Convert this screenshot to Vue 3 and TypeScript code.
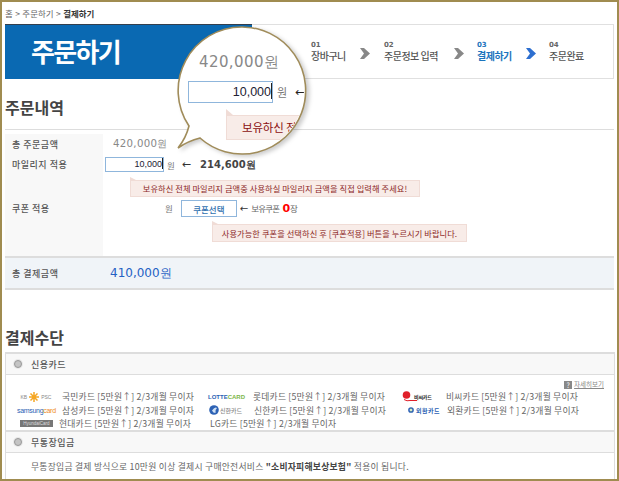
<script setup lang="ts">
const steps = [
  { no: '01', label: '장바구니', width: 73, text: 49 },
  { no: '02', label: '주문정보 입력', width: 93, text: 70 },
  { no: '03', label: '결제하기', width: 72, text: 49 },
  { no: '04', label: '주문완료', width: 60, text: 60 },
]
const activeStep = '03'
const benefit = '[5만원↑] 2/3개월 무이자'
const cards = [
  { name: '국민카드', kind: 'kb', logo: [{ t: 'KB', c: 'gray' }, { t: 'PSC', c: 'gray' }] },
  { name: '롯데카드', kind: 'lotte', logo: [{ t: 'LOTTE', c: 'blue' }, { t: 'CARD', c: 'green' }] },
  { name: '비씨카드', kind: 'bc', logo: [{ t: '비씨카드', c: 'dark' }] },
  { name: '삼성카드', kind: 'samsung', logo: [{ t: 'samsung', c: 'blue' }, { t: 'card', c: 'orange' }] },
  { name: '신한카드', kind: 'shinhan', logo: [{ t: '신한카드', c: 'gray' }] },
  { name: '외환카드', kind: 'keb', logo: [{ t: '외환카드', c: 'blue' }] },
  { name: '현대카드', kind: 'hyundai', logo: [{ t: 'HyundaiCard', c: 'light' }] },
  { name: 'LG카드', kind: 'none', logo: [] },
]
</script>

<template>
  <div class="frame">
    <div class="crumbs">홈 &gt; 주문하기 &gt; <b>결제하기</b></div>

    <header class="hero">
      <div class="hero-title">주문하기</div>
      <ol class="steps">
        <li
          v-for="(s, i) in steps"
          :key="s.no"
          class="step"
          :class="{ active: s.no === activeStep }"
          :style="{ width: s.width + 'px' }"
        >
          <div class="step-text" :style="{ width: s.text + 'px' }">
            <span class="step-no">{{ s.no }}</span>
            <span class="step-label">{{ s.label }}</span>
          </div>
          <svg v-if="i < 3" class="chev" viewBox="0 0 10 11" width="10" height="11">
            <path d="M0 0h4l6 5.500-6 5.500H0l4-5.500z" />
          </svg>
        </li>
      </ol>
    </header>

    <h2 class="section order-title">주문내역</h2>

    <section class="order">
      <div class="label">총 주문금액</div>
      <div class="value"><span class="amount">420,000원</span></div>

      <div class="label">마일리지 적용</div>
      <div class="value">
        <span class="input">10,000<i class="caret"></i></span>
        <span class="won">원</span>
        <span class="arrow">←</span>
        <strong class="mileage">214,600원</strong>
      </div>

      <div class="label"></div>
      <div class="value top">
        <div class="tip tip-a">보유하신 전체 마일리지 금액중 사용하실 마일리지 금액을 직접 입력해 주세요!</div>
      </div>

      <div class="label">쿠폰 적용</div>
      <div class="value">
        <span class="won coupon-won">원</span>
        <button class="coupon-btn" type="button">쿠폰선택</button>
        <span class="arrow small">←</span>
        <span class="owned">보유쿠폰 <em>0</em>장</span>
      </div>

      <div class="label"></div>
      <div class="value top">
        <div class="tip tip-b">사용가능한 쿠폰을 선택하신 후 [쿠폰적용] 버튼을 누르시기 바랍니다.</div>
      </div>
    </section>

    <section class="total">
      <span class="total-label">총 결제금액</span>
      <span class="total-value">410,000원</span>
    </section>

    <h2 class="section pay-title">결제수단</h2>

    <section class="pay">
      <div class="pay-head">
        <i class="radio"></i><span>신용카드</span>
      </div>
      <div class="pay-cards">
        <div class="more"><i class="q">?</i><a>자세히보기</a></div>
        <div class="card-grid">
          <div v-for="c in cards" :key="c.name" class="card">
            <span class="logo" :class="'logo-' + c.kind">
              <svg v-if="c.kind === 'bc'" class="bc-mark" viewBox="0 0 16 11" width="16" height="11">
                <circle cx="4.500" cy="4" r="3.800" fill="#e0202a" />
                <path d="M2 8.500 Q5 10.500 8 9.500 H15" fill="none" stroke="#e0202a" stroke-width="1" />
              </svg>
              <svg v-if="c.kind === 'shinhan'" class="mark" viewBox="0 0 10 10" width="10" height="10">
                <circle cx="5" cy="5" r="4.800" fill="#2d62b5" />
                <path d="M3 5.500 Q6 1.500 8 3 Q6 4.500 6.500 8 Q4 8 3 5.500z" fill="#cfe0f4" />
              </svg>
              <svg v-if="c.kind === 'keb'" class="mark" viewBox="0 0 10 10" width="6" height="6">
                <circle cx="5" cy="5" r="3.500" fill="none" stroke="#2d62b5" stroke-width="2.500" />
                <path d="M5 2v6" stroke="#7ab648" stroke-width="1" />
              </svg>
              <template v-for="(p, idx) in c.logo" :key="p.t">
                <svg
                  v-if="c.kind === 'kb' && idx === 1"
                  class="kb-star"
                  viewBox="0 0 10 10"
                  width="10"
                  height="10"
                >
                  <path
                    d="M5 0v10M0 5h10M1.500 1.500l7 7M8.500 1.500l-7 7"
                    stroke="#f5a623"
                    stroke-width="1.500"
                  />
                </svg>
                <span :class="'ink-' + p.c">{{ p.t }}</span>
              </template>
            </span>
            <span class="card-text">{{ c.name }} {{ benefit }}</span>
          </div>
        </div>
      </div>
      <div class="pay-head second">
        <i class="radio"></i><span>무통장입금</span>
      </div>
      <p class="pay-note">
        무통장입금 결제 방식으로 10만원 이상 결제시 구매안전서비스 <b>"소비자피해보상보험"</b> 적용이 됩니다.
      </p>
    </section>

    <!-- Magnifier callout over the form -->
    <div class="lens">
      <svg class="lens-shape" viewBox="0 0 140 140" width="140" height="140">
        <path
          d="M66 2A63.500 63.500 0 1 1 24 113Q12 116 2 123Q10 113 13 101A63.500 63.500 0 0 1 66 2z"
          fill="#fff"
          stroke="#a08c5a"
          stroke-width="1.600"
        />
      </svg>
      <div class="lens-content">
        <div class="lens-amount">420,000원</div>
        <div class="lens-row">
          <span class="lens-input">10,000<i class="lens-caret"></i></span>
          <span class="lens-won">원</span>
          <span class="lens-arrow">←</span>
        </div>
        <div class="lens-tip">보유하신 전체</div>
      </div>
    </div>
  </div>
</template>

<style>
html, body { margin: 0; overflow: hidden; background: #fff; }
</style>

<style scoped>
.frame {
  position: relative;
  box-sizing: border-box;
  width: 619px;
  height: 481px;
  overflow: hidden;
  border: 2px solid #a08c50;
  padding: 0 3px;
  background: #fff;
  font-family: "Noto Sans CJK KR", "Noto Sans", sans-serif;
  color: #555;
}
.crumbs {
  height: 22px;
  padding-top: 5px;
  box-sizing: border-box;
  font-size: 8.500px;
  line-height: 12px;
  color: #666;
  word-spacing: 0.500px;
}
.crumbs b { color: #333; }

.hero {
  display: flex;
  height: 55px;
  box-sizing: border-box;
  border: 1px solid #e0e0e0;
  border-left: 0;
}
.hero-title {
  box-sizing: border-box;
  width: 247px;
  margin: -1px 0;
  padding: 6px 0 0 26px;
  background: #0a69b2;
  border-top: 1px solid #333f4d;
  color: #fff;
  font-size: 26px;
  font-weight: 700;
  line-height: 40px;
  letter-spacing: -1.700px;
}
.steps {
  display: flex;
  margin: 0;
  padding: 17px 0 0 59px;
  list-style: none;
}
.step { display: flex; color: #555; }
.step-text { display: flex; flex-direction: column; flex: none; }
.step-no {
  font-family: "DejaVu Sans", sans-serif;
  font-size: 7px;
  line-height: 7px;
  font-weight: 700;
  color: #666;
}
.step-label {
  font-size: 10px;
  line-height: 13px;
  font-weight: 500;
  letter-spacing: -0.500px;
  white-space: nowrap;
}
.chev { margin: 6px 0 0 0; fill: #888; flex: none; }
.step.active .step-no, .step.active .step-label { color: #1b74bd; }
.step.active .step-label { font-weight: 700; }
.step.active .chev { fill: #2d6fd0; }

.section {
  margin: 0;
  font-size: 16px;
  font-weight: 700;
  color: #444;
  line-height: 22px;
}
.order-title {
  height: 51px;
  padding-top: 17px;
  box-sizing: border-box;
  border-bottom: 1px solid #ddd;
}
.order {
  display: grid;
  grid-template-columns: 98px 1fr;
  grid-template-rows: 20px 21px 21px 24px 36px;
  margin-top: 4px;
  width: 609px;
  height: 122px;
}
.label {
  background: #f8f8f8;
  padding-left: 7px;
  font-size: 9px;
  font-weight: 500;
  letter-spacing: 0.500px;
  color: #555;
  display: flex;
  align-items: center;
}
.value { display: flex; align-items: center; min-width: 0; position: relative; }
.value.top { align-items: flex-start; }
.amount {
  padding-left: 10px;
  font-family: "DejaVu Sans", sans-serif;
  font-size: 10.200px;
  color: #888;
  letter-spacing: 0.300px;
}
.input {
  box-sizing: border-box;
  width: 59px;
  height: 15px;
  margin-left: 2px;
  padding-right: 0;
  border: 1px solid #8fb6dc;
  text-align: right;
  font-family: "Liberation Sans", sans-serif;
  font-size: 9px;
  line-height: 13px;
  color: #223;
}
.caret {
  display: inline-block;
  width: 1px;
  height: 11px;
  background: #222;
  vertical-align: -2px;
}
.won { margin-left: 3px; font-size: 8.500px; color: #777; }
.arrow {
  margin-left: 7px;
  font-family: "DejaVu Sans", sans-serif;
  font-size: 11px;
  color: #333;
}
.mileage {
  margin-left: 9px;
  font-family: "DejaVu Sans", sans-serif;
  font-size: 10px;
  font-weight: 700;
  color: #444;
}
.tip {
  position: relative;
  box-sizing: border-box;
  background: #f8ece8;
  border: 1px solid #f0dcd6;
  font-size: 8.200px;
  color: #8b1f1f;
  letter-spacing: 0.100px;
  white-space: nowrap;
  text-align: center;
}
.tip::before {
  content: "";
  position: absolute;
  left: -1px;
  top: -4px;
  width: 0;
  height: 0;
  border-left: 6px solid #f0dcd6;
  border-top: 3px solid transparent;
}
.tip-a { width: 290px; height: 17px; line-height: 15px; margin: 5px 0 0 27px; }
.tip-b { width: 255px; height: 18px; line-height: 16px; margin: 4px 0 0 109px; }
.coupon-won { margin-left: 62px; }
.coupon-btn {
  box-sizing: border-box;
  width: 56px;
  height: 17px;
  margin: 1px 0 0 8px;
  padding: 0;
  background: #fff;
  border: 1px solid #8fb6dc;
  font-family: inherit;
  font-size: 8.500px;
  font-weight: 500;
  color: #2f6fae;
}
.arrow.small { margin: 0 0 0 3px; font-size: 10px; }
.owned { margin: 0 0 0 3px; font-size: 8.500px; color: #666; letter-spacing: -0.800px; word-spacing: 2px; }
.owned em {
  font-style: normal;
  font-family: "DejaVu Sans", sans-serif;
  font-size: 11px;
  font-weight: 700;
  letter-spacing: 0;
  color: #f00;
}

.total {
  display: flex;
  align-items: center;
  box-sizing: border-box;
  height: 34px;
  background: #f0f4f8;
  border-top: 2px solid #ddd;
  border-bottom: 2px solid #ddd;
}
.total-label {
  width: 105px;
  padding-left: 7px;
  box-sizing: border-box;
  font-size: 9px;
  font-weight: 500;
  letter-spacing: 0.500px;
}
.total-value {
  font-family: "DejaVu Sans", sans-serif;
  font-size: 12px;
  color: #2461c4;
}

.pay-title { height: 62px; padding-top: 36px; box-sizing: border-box; }
.pay {
  box-sizing: border-box;
  width: 610px;
  height: 140px;
  border: 1px solid #ddd;
  border-top-width: 2px;
}
.pay-head {
  display: flex;
  align-items: center;
  box-sizing: border-box;
  height: 21px;
  padding-left: 8px;
  background: #f8f8f8;
  border-bottom: 1px solid #ddd;
  font-size: 9px;
  font-weight: 500;
  letter-spacing: 0.500px;
}
.pay-head.second { height: 23px; border-top: 2px solid #ddd; }
.radio {
  box-sizing: border-box;
  width: 8px;
  height: 8px;
  margin-right: 9px;
  border-radius: 50%;
  background: #c4c4c4;
  border: 1px solid #999;
  box-shadow: 0 0 0 1px #e8e8e8;
}
.pay-cards { position: relative; height: 55px; }
.more {
  position: absolute;
  right: 10px;
  top: 5px;
  display: flex;
  align-items: center;
  gap: 2px;
  font-size: 6.500px;
  line-height: 9px;
  color: #888;
}
.more a { text-decoration: underline; }
.q {
  width: 8px;
  height: 8px;
  background: #888;
  color: #fff;
  font-style: normal;
  font-size: 7px;
  line-height: 8px;
  text-align: center;
}
.card-grid {
  display: grid;
  grid-template-columns: 194px 192px 1fr;
  grid-auto-rows: 13.500px;
  padding: 15px 0 0 11px;
}
.card { display: flex; align-items: center; white-space: nowrap; }
.logo {
  display: flex;
  align-items: center;
  justify-content: flex-end;
  flex: none;
  box-sizing: border-box;
  width: 38px;
  margin-right: 7px;
  font-size: 7px;
  font-family: "Liberation Sans", sans-serif;
  font-weight: 700;
}
.card-text {
  font-size: 8.800px;
  letter-spacing: 0.200px;
  color: #666;
}
.ink-gray { color: #888; }
.ink-blue { color: #2b5fb4; }
.ink-green { color: #7ab648; }
.ink-orange { color: #ee8a1d; }
.ink-dark { color: #222; }
.ink-light { color: #ddd; }

.logo-kb { font-size: 5px; font-weight: 400; justify-content: center; }
.kb-star { margin: 0 2px; }
.logo-lotte { width: 35px; margin-left: -1px; margin-right: 8px; font-size: 6px; letter-spacing: 0; }
.logo-samsung { font-size: 7px; font-weight: 400; letter-spacing: -0.300px; justify-content: flex-start; }
.logo-bc { width: 37px; margin-left: -1px; font-size: 5px; letter-spacing: -0.200px; font-family: "Noto Sans CJK KR", sans-serif; justify-content: flex-start; }
.bc-mark { margin-right: -4px; }
.logo-shinhan { width: 36px; margin-left: -2px; margin-right: 9px; font-size: 6px; font-weight: 500; font-family: "Noto Sans CJK KR", sans-serif; justify-content: flex-start; gap: 1px; }
.logo-keb { width: 37px; font-size: 6px; letter-spacing: 0.500px; font-family: "Noto Sans CJK KR", sans-serif; gap: 2px; }
.logo-hyundai {
  background: #777;
  font-size: 4.500px;
  font-weight: 400;
  height: 7px;
  justify-content: center;
  width: 33px;
  margin-left: 3px;
  margin-right: 6px;
}
.logo-none { width: 0; margin: 0 0 0 -1px; }

.pay-note {
  margin: 0;
  padding: 7px 0 0 25px;
  font-size: 8.800px;
  line-height: 14px;
  letter-spacing: 0.260px;
  color: #666;
  white-space: nowrap;
}
.pay-note b { color: #444; }

.lens {
  position: absolute;
  left: 174px;
  top: 23px;
  width: 140px;
  height: 134px;
}
.lens-shape {
  position: absolute;
  left: 0;
  top: 0;
  overflow: visible;
  filter: drop-shadow(3px 2px 2px rgba(0, 0, 0, 0.2));
}
.lens-content {
  position: absolute;
  left: 4px;
  top: 3.500px;
  width: 124px;
  height: 124px;
  border-radius: 50%;
  overflow: hidden;
}
.lens-amount {
  margin: 24px 0 0 19px;
  font-family: "DejaVu Sans", sans-serif;
  font-size: 15px;
  line-height: 18px;
  letter-spacing: 0.400px;
  color: #888;
}
.lens-row { display: flex; align-items: center; margin: 10px 0 0 8px; }
.lens-input {
  box-sizing: border-box;
  flex: none;
  width: 85px;
  height: 22px;
  padding-right: 0;
  border: 1px solid #8fb6dc;
  text-align: right;
  font-family: "Liberation Sans", sans-serif;
  font-size: 12.500px;
  line-height: 20px;
  color: #223;
}
.lens-caret {
  display: inline-block;
  width: 1px;
  height: 16px;
  background: #222;
  vertical-align: -3px;
}
.lens-won { margin-left: 4px; font-size: 11px; color: #777; }
.lens-arrow {
  margin-left: 8px;
  font-family: "DejaVu Sans", sans-serif;
  font-size: 12px;
  color: #222;
}
.lens-tip {
  box-sizing: border-box;
  position: relative;
  width: 120px;
  height: 25px;
  margin: 12px 0 0 46px;
  padding-left: 15px;
  background: #f8ece8;
  border: 1px solid #f0dcd6;
  font-size: 11.500px;
  line-height: 22px;
  color: #8b1010;
  letter-spacing: -0.200px;
  white-space: nowrap;
}
.lens-tip::before {
  content: "";
  position: absolute;
  left: -1px;
  top: -7px;
  border-left: 7px solid #f0dcd6;
  border-top: 6px solid transparent;
}
</style>
